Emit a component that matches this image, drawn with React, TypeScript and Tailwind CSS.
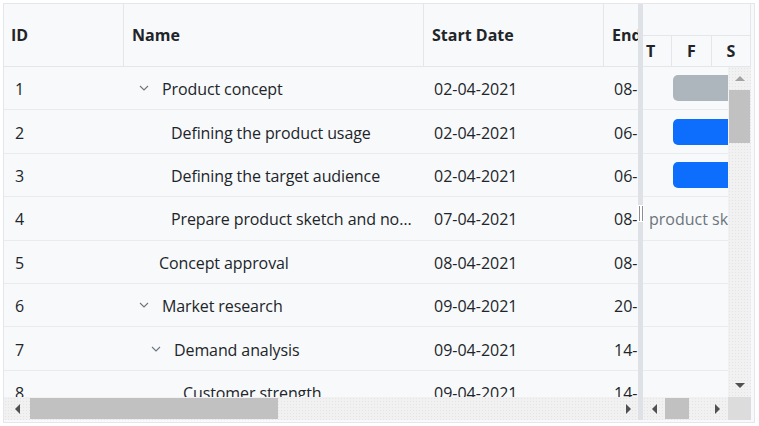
import React from 'react';

type Task = {
  id: number;
  name: string;
  start: string;
  end: string;
  pad: number;
  chevron?: number;
};

const TASKS: Task[] = [
  { id: 1, name: 'Product concept', start: '02-04-2021', end: '08-', pad: 38, chevron: 15 },
  { id: 2, name: 'Defining the product usage', start: '02-04-2021', end: '06-', pad: 47 },
  { id: 3, name: 'Defining the target audience', start: '02-04-2021', end: '06-', pad: 47 },
  { id: 4, name: 'Prepare product sketch and notes', start: '07-04-2021', end: '08-', pad: 47 },
  { id: 5, name: 'Concept approval', start: '08-04-2021', end: '08-', pad: 35 },
  { id: 6, name: 'Market research', start: '09-04-2021', end: '20-', pad: 38, chevron: 15 },
  { id: 7, name: 'Demand analysis', start: '09-04-2021', end: '14-', pad: 50, chevron: 27 },
  { id: 8, name: 'Customer strength', start: '09-04-2021', end: '14-', pad: 59 },
];

const FONT = { fontFamily: '"Segoe UI", "Open Sans", "Noto Sans", sans-serif' };

function Chevron({ left }: { left: number }) {
  return (
    <svg
      className="absolute top-1/2 -translate-y-1/2"
      style={{ left }}
      width="10"
      height="6"
      viewBox="0 0 10 6"
      fill="none"
    >
      <path d="M1 1l4 4 4-4" stroke="#6c757d" strokeWidth="1.1" />
    </svg>
  );
}

// ─── Classic scrollbar pieces ────────────────────────────────────────────────

const TRACK = 'bg-[#f1f1f1] bg-[radial-gradient(#e4e4e4_0.6px,transparent_0.6px)] bg-[length:3px_3px]';

function ArrowLeft() {
  return <div className="w-0 h-0 border-y-[5px] border-y-transparent border-r-[5px] border-r-[#505050]" />;
}
function ArrowRight() {
  return <div className="w-0 h-0 border-y-[5px] border-y-transparent border-l-[5px] border-l-[#505050]" />;
}

export default function App() {
  return (
    <div className="w-[759px] h-[426px] bg-white p-[3px] text-[#212529]" style={FONT}>
      <div className="w-[752px] h-[420px] border border-[#e3e6ea] bg-[#f8f9fb] flex overflow-hidden pb-[2px]">
        {/* ─── Grid pane ─── */}
        <div className="w-[634px] flex flex-col shrink-0">
          <div className="flex-1 overflow-hidden">
            <div className="grid grid-cols-[120px_300px_180px_200px] w-[800px]">
              {/* header */}
              {['ID', 'Name', 'Start Date', 'End Date'].map((h, i) => (
                <div
                  key={h}
                  className={`h-[63px] flex items-center font-bold text-[16px] border-b border-[#e3e6ea] ${
                    i === 0 ? 'pl-[7px]' : 'pl-[8px]'
                  } ${i < 3 ? 'border-r border-r-[#e3e6ea]' : ''}`}
                >
                  {h}
                </div>
              ))}
              {TASKS.map(t => (
                <React.Fragment key={t.id}>
                  <div className="h-[43.4px] flex items-center pl-[11px] pt-[2px] text-[16px] border-b border-[#e9ecef]">
                    {t.id}
                  </div>
                  <div
                    className="relative h-[43.4px] flex items-center pt-[2px] text-[16px] border-b border-[#e9ecef] pr-[10px] min-w-0"
                    style={{ paddingLeft: t.pad }}
                  >
                    {t.chevron !== undefined && <Chevron left={t.chevron} />}
                    <span className="truncate tracking-[-0.1px]">{t.name}</span>
                  </div>
                  <div className="h-[43.4px] flex items-center pl-[10px] pt-[2px] text-[16px] border-b border-[#e9ecef]">
                    {t.start}
                  </div>
                  <div className="h-[43.4px] flex items-center pl-[10px] pt-[2px] text-[16px] border-b border-[#e9ecef]">
                    {t.end}
                  </div>
                </React.Fragment>
              ))}
            </div>
          </div>
          {/* horizontal scrollbar */}
          <div className={`h-[23px] shrink-0 flex items-center ${TRACK}`}>
            <div className="w-[26px] flex justify-center">
              <ArrowLeft />
            </div>
            <div className="w-[248px] h-[21px] bg-[#c1c1c1]" />
            <div className="flex-1" />
            <div className="w-[20px] flex justify-center">
              <ArrowRight />
            </div>
          </div>
        </div>

        {/* ─── Splitter ─── */}
        <div className="relative w-[5px] shrink-0 bg-[#dee2e6]">
          <div className="absolute left-[-1px] top-[201px] w-[7px] h-[17px] bg-white rounded-[1px] flex justify-center gap-[2px] py-[1px]">
            <div className="w-px h-full bg-[#8a8f96]" />
            <div className="w-px h-full bg-[#8a8f96]" />
          </div>
        </div>

        {/* ─── Chart pane ─── */}
        <div className="w-[108px] shrink-0 flex flex-col">
          <div className="shrink-0">
            <div className="h-[32px] border-b border-r border-[#e3e6ea]" />
            <div className="h-[31px] grid grid-cols-[29px_40px_39px] border-b border-[#e3e6ea] font-bold text-[16px]">
              <div className="flex items-center pl-[3px] border-r border-[#e3e6ea]">T</div>
              <div className="flex items-center justify-center border-r border-[#e3e6ea]">F</div>
              <div className="flex items-center justify-center border-r border-[#e3e6ea]">S</div>
            </div>
          </div>
          <div className="flex-1 flex min-h-0">
            <div className="flex-1 overflow-hidden">
              {TASKS.map(t => (
                <div key={t.id} className="h-[43.4px] border-b border-[#e9ecef] flex items-center relative">
                  {t.id === 1 && <div className="shrink-0 ml-[30px] w-[80px] h-[26px] rounded-[5px] bg-[#adb5bd]" />}
                  {(t.id === 2 || t.id === 3) && (
                    <div className="shrink-0 ml-[30px] w-[80px] h-[26px] rounded-[5px] bg-[#0d6efd]" />
                  )}
                  {t.id === 4 && (
                    <span className="ml-[6px] pt-[2px] text-[16px] text-[#6c757d] whitespace-nowrap">product sketch</span>
                  )}
                </div>
              ))}
            </div>
            {/* vertical scrollbar */}
            <div className={`w-[23px] shrink-0 flex flex-col items-center ${TRACK}`}>
              <div className="h-[23px] flex items-center justify-center">
                <div className="w-0 h-0 border-x-[5px] border-x-transparent border-b-[5px] border-b-[#a3a3a3]" />
              </div>
              <div className="w-[21px] h-[53px] bg-[#c1c1c1]" />
              <div className="flex-1" />
              <div className="h-[23px] flex items-center justify-center">
                <div className="w-0 h-0 border-x-[5px] border-x-transparent border-t-[5px] border-t-[#505050]" />
              </div>
            </div>
          </div>
          {/* horizontal scrollbar */}
          <div className="h-[23px] shrink-0 flex">
            <div className={`flex-1 flex items-center ${TRACK}`}>
              <div className="w-[22px] flex justify-center">
                <ArrowLeft />
              </div>
              <div className="w-[24px] h-[21px] bg-[#c1c1c1]" />
              <div className="flex-1" />
              <div className="w-[22px] flex justify-center">
                <ArrowRight />
              </div>
            </div>
            <div className="w-[23px] bg-[#dcdcdc]" />
          </div>
        </div>
      </div>
    </div>
  );
}
